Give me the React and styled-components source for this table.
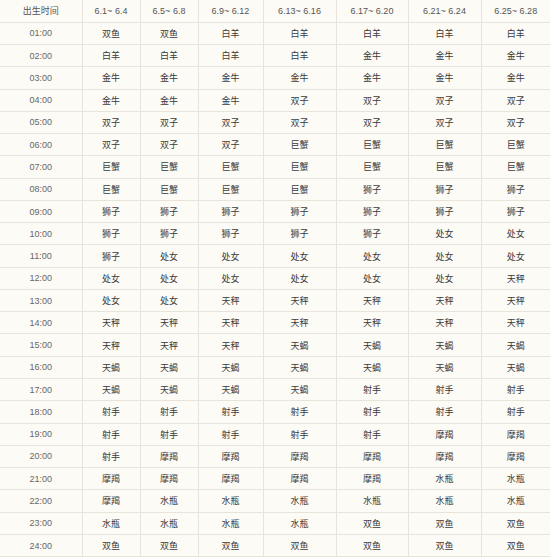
import React from "react";
import styled, { createGlobalStyle } from "styled-components";

const Global = createGlobalStyle`
  html, body { margin: 0; padding: 0; background: #fdfbf6; }
`;

const cols = [82, 58, 58, 65, 73, 72, 73, 69];

const heads = ["出生时间", "6.1~ 6.4", "6.5~ 6.8", "6.9~ 6.12", "6.13~ 6.16", "6.17~ 6.20", "6.21~ 6.24", "6.25~ 6.28"];

// 每行: 时间 + 7个时段的上升星座
const rows = [
  ["01:00", "双鱼", "双鱼", "白羊", "白羊", "白羊", "白羊", "白羊"],
  ["02:00", "白羊", "白羊", "白羊", "白羊", "金牛", "金牛", "金牛"],
  ["03:00", "金牛", "金牛", "金牛", "金牛", "金牛", "金牛", "金牛"],
  ["04:00", "金牛", "金牛", "金牛", "双子", "双子", "双子", "双子"],
  ["05:00", "双子", "双子", "双子", "双子", "双子", "双子", "双子"],
  ["06:00", "双子", "双子", "双子", "巨蟹", "巨蟹", "巨蟹", "巨蟹"],
  ["07:00", "巨蟹", "巨蟹", "巨蟹", "巨蟹", "巨蟹", "巨蟹", "巨蟹"],
  ["08:00", "巨蟹", "巨蟹", "巨蟹", "巨蟹", "狮子", "狮子", "狮子"],
  ["09:00", "狮子", "狮子", "狮子", "狮子", "狮子", "狮子", "狮子"],
  ["10:00", "狮子", "狮子", "狮子", "狮子", "狮子", "处女", "处女"],
  ["11:00", "狮子", "处女", "处女", "处女", "处女", "处女", "处女"],
  ["12:00", "处女", "处女", "处女", "处女", "处女", "处女", "天秤"],
  ["13:00", "处女", "处女", "天秤", "天秤", "天秤", "天秤", "天秤"],
  ["14:00", "天秤", "天秤", "天秤", "天秤", "天秤", "天秤", "天秤"],
  ["15:00", "天秤", "天秤", "天秤", "天蝎", "天蝎", "天蝎", "天蝎"],
  ["16:00", "天蝎", "天蝎", "天蝎", "天蝎", "天蝎", "天蝎", "天蝎"],
  ["17:00", "天蝎", "天蝎", "天蝎", "天蝎", "射手", "射手", "射手"],
  ["18:00", "射手", "射手", "射手", "射手", "射手", "射手", "射手"],
  ["19:00", "射手", "射手", "射手", "射手", "射手", "摩羯", "摩羯"],
  ["20:00", "射手", "摩羯", "摩羯", "摩羯", "摩羯", "摩羯", "摩羯"],
  ["21:00", "摩羯", "摩羯", "摩羯", "摩羯", "摩羯", "水瓶", "水瓶"],
  ["22:00", "摩羯", "水瓶", "水瓶", "水瓶", "水瓶", "水瓶", "水瓶"],
  ["23:00", "水瓶", "水瓶", "水瓶", "水瓶", "双鱼", "双鱼", "双鱼"],
  ["24:00", "双鱼", "双鱼", "双鱼", "双鱼", "双鱼", "双鱼", "双鱼"],
];

const Table = styled.table`
  width: 550px;
  border-collapse: collapse;
  table-layout: fixed;
  background: #fdfbf6;
  font-family: "Liberation Sans", "Noto Sans CJK SC", sans-serif;
  font-size: 9px;
  color: #444;
`;

const Col = styled.col`
  width: ${(p) => p.$w}px;
`;

const Row = styled.tr`
  height: 22.28px;
`;

const Cell = styled.td`
  text-align: center;
  vertical-align: middle;
  padding: 0;
  border: 1px solid #e9e4da;
  color: ${(p) => (p.$time ? "#666" : "#3a3a3a")};
  &:first-child { border-left: none; }
  &:last-child { border-right: none; }
`;

const HeadCell = styled.th`
  text-align: center;
  vertical-align: middle;
  padding: 0;
  font-weight: normal;
  color: #555;
  border: 1px solid #e9e4da;
  border-top: none;
  &:first-child { border-left: none; }
  &:last-child { border-right: none; }
`;

export default function App() {
  return (
    <>
      <Global />
      <Table>
        <colgroup>
          {cols.map((w, i) => <Col key={i} $w={w} />)}
        </colgroup>
        <thead>
          <Row>
            {heads.map((h) => <HeadCell key={h}>{h}</HeadCell>)}
          </Row>
        </thead>
        <tbody>
          {rows.map((r) => (
            <Row key={r[0]}>
              {r.map((c, i) => <Cell key={i} $time={i === 0}>{c}</Cell>)}
            </Row>
          ))}
        </tbody>
      </Table>
    </>
  );
}
